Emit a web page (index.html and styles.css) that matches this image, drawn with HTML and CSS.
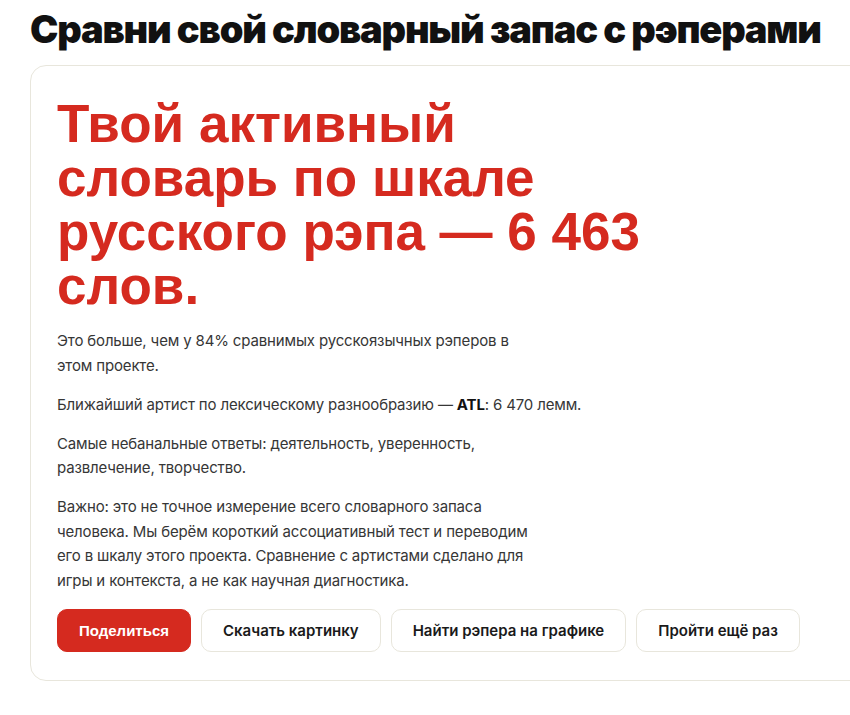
FILE: index.html
```html
<!DOCTYPE html>
<html lang="ru">

<head>
    <meta charset="UTF-8">
    <meta name="viewport" content="width=device-width, initial-scale=1.0">
    <title>Словарный запас</title>
    <link rel="stylesheet" href="styles.css">
</head>

<body>
    <main class="page">
        <h1 class="page-title">Сравни свой словарный запас с рэперами</h1>

        <section class="result-card">
            <h2 class="result-headline">Твой активный словарь по шкале русского рэпа — 6&nbsp;463 слов.</h2>

            <div class="result-text">
                <p>Это больше, чем у 84% сравнимых русскоязычных рэперов в этом проекте.</p>
                <p class="nearest">Ближайший артист по лексическому разнообразию — <b>ATL</b>: 6&nbsp;470 лемм.</p>
                <p>Самые небанальные ответы: деятельность, уверенность, развлечение, творчество.</p>
                <p>Важно: это не точное измерение всего словарного запаса человека. Мы берём короткий ассоциативный тест и переводим его в шкалу этого проекта. Сравнение с артистами сделано для игры и контекста, а не как научная диагностика.</p>
            </div>

            <div class="actions">
                <button class="btn btn-primary">Поделиться</button>
                <button class="btn">Скачать картинку</button>
                <button class="btn">Найти рэпера на графике</button>
                <button class="btn">Пройти ещё раз</button>
            </div>
        </section>
    </main>
</body>

</html>
```

FILE: styles.css
```css
/* General Styles */
body {
    margin: 0;
    padding: 0;
    background: #fff;
    font-family: Inter, "Noto Sans", sans-serif;
    color: #2b2b2b;
    overflow: hidden;
}

.page {
    width: 900px;
    padding: 4px 0 0 30px;
}

/* Page title */
.page-title {
    margin: 0 0 11px;
    font-family: Inter, sans-serif;
    font-weight: 900;
    font-size: 38px;
    line-height: 50px;
    letter-spacing: -1.2px;
    color: #111;
}

/* Result card */
.result-card {
    border: 1px solid #e8e6dc;
    border-radius: 16px;
    padding: 31px 26px 28px;
}

.result-headline {
    margin: 0 0 16px;
    max-width: 620px;
    font-family: "Liberation Sans", Arial, sans-serif;
    font-weight: 700;
    font-size: 53px;
    line-height: 54px;
    color: #d52a1f;
}

.result-text p {
    max-width: 480px;
    margin: 0 0 14.5px;
    font-size: 15px;
    line-height: 24.5px;
    letter-spacing: -0.15px;
    color: #363636;
}

.result-text .nearest {
    max-width: none;
}

.result-text b {
    color: #111;
}

/* Buttons */
.actions {
    display: flex;
    gap: 10px;
    margin-top: 16px;
}

.btn {
    height: 43px;
    padding: 0 21px;
    border: 1px solid #e8e6dc;
    border-radius: 10px;
    background: #fff;
    font-family: Inter, sans-serif;
    font-weight: 600;
    font-size: 15px;
    color: #1a1a1a;
    cursor: pointer;
}

.btn-primary {
    background: #d52a1f;
    border-color: #d52a1f;
    color: #fff;
    font-family: "Liberation Sans", Arial, sans-serif;
    font-weight: 700;
}
```
